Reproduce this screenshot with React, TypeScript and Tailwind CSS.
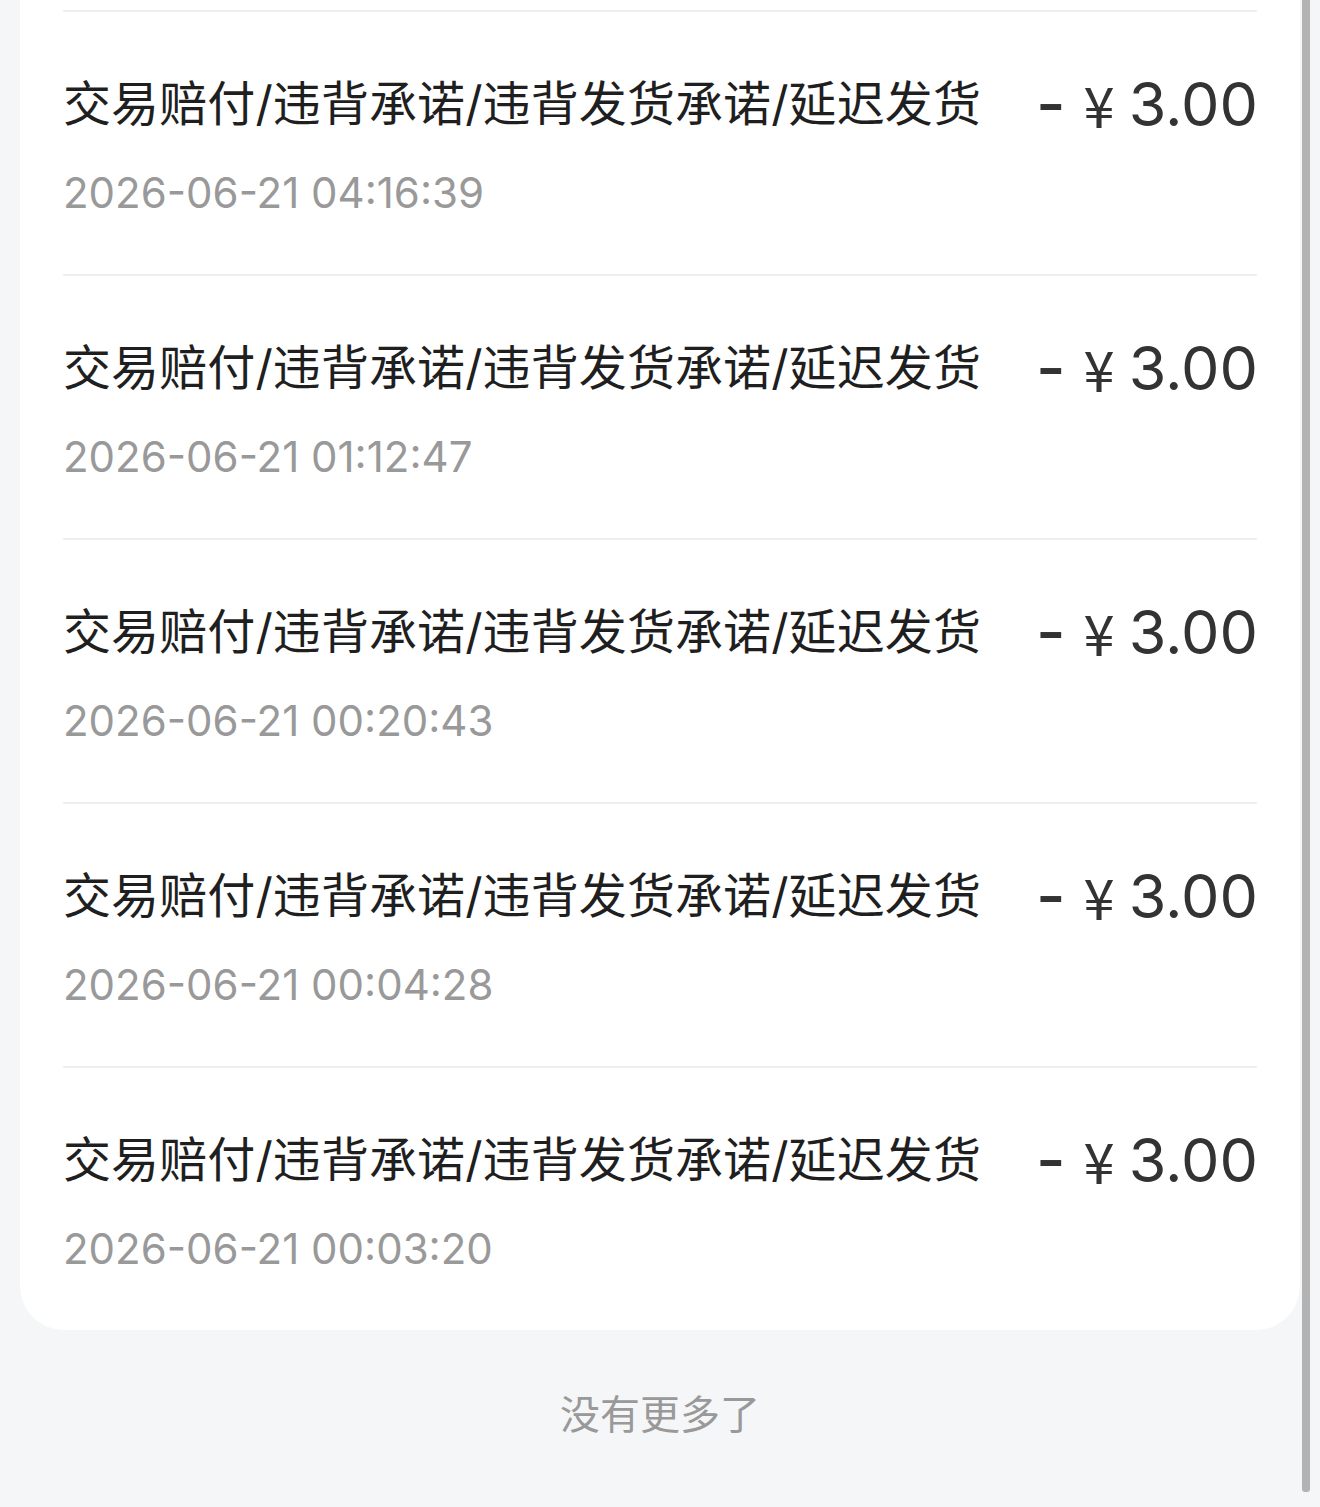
const rows = [
  "2026-06-21 04:16:39",
  "2026-06-21 01:12:47",
  "2026-06-21 00:20:43",
  "2026-06-21 00:04:28",
  "2026-06-21 00:03:20",
];

export default function App() {
  return (
    <div
      className="relative min-h-[1507px] w-[1320px] bg-[#f5f6f8] overflow-hidden"
      style={{ fontFamily: "Inter, 'Noto Sans CJK SC', sans-serif" }}
    >
      {/* Card */}
      <div className="ml-[20px] w-[1280px] bg-white rounded-b-[44px] pt-[10px] -mb-[2px]">
        {rows.map((date) => (
          <div key={date} className="mx-[43px] border-t-2 border-[#efefef] pt-[60px] pb-[56px]">
            <div className="flex items-center justify-between h-[64px]">
              <span className="text-[48px] leading-[64px] text-[#1f1f1f] tracking-[0.1px]">
                交易赔付/违背承诺/违背发货承诺/延迟发货
              </span>
              <span className="flex items-center text-[#333] text-[61px] leading-[64px] -mr-[1px]">
                <span className="text-[64px] font-medium mr-[18px]">-</span>
                <span className="text-[56px] mr-[14px]" style={{ fontFamily: "'Noto Sans CJK SC', sans-serif" }}>
                  ¥
                </span>
                <span>3.00</span>
              </span>
            </div>
            <div className="mt-[32px] text-[42px] leading-[50px] text-[#999]">{date}</div>
          </div>
        ))}
      </div>

      {/* Footer */}
      <div className="pt-[58px] text-center text-[40px] leading-[52px] text-[#999]" style={{ fontFamily: "'Noto Sans CJK SC', sans-serif" }}>
        没有更多了
      </div>

      {/* Scrollbar overlay */}
      <div className="absolute top-0 left-[1302px] w-[8px] h-[1492px] bg-[#b3b3b3] rounded-b-[3px]" />
    </div>
  );
}
